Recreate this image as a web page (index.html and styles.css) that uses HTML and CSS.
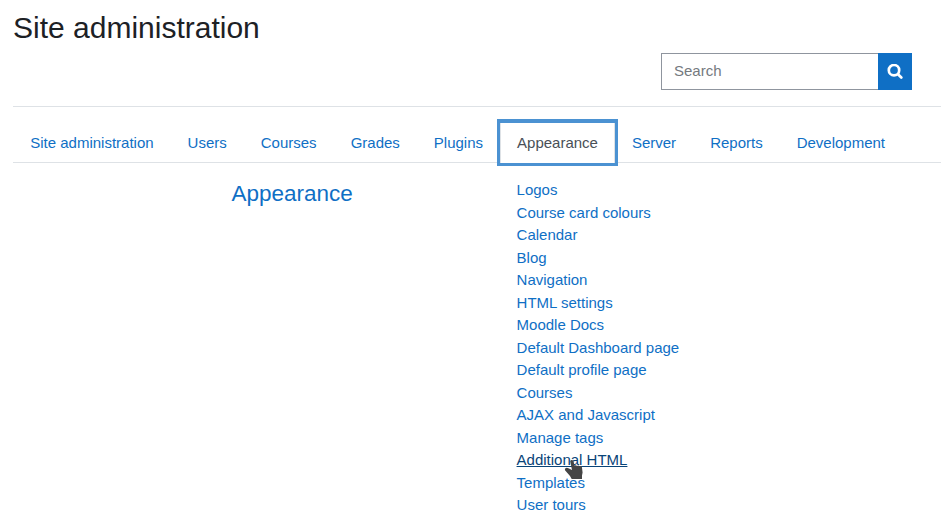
FILE: index.html
```html
<!DOCTYPE html>
<html lang="en">
<head>
<meta charset="utf-8">
<title>Site administration</title>
<link rel="stylesheet" href="styles.css">
</head>
<body>
<main class="page">
<h1>Site administration</h1>
<form class="search"><input type="text" placeholder="Search" aria-label="Search"><button type="button" aria-label="Search"><svg width="16" height="16" viewBox="0 0 16 16"><circle cx="7" cy="6.2" r="5.2"/><path d="M11 10.200l3.300 3.300"/></svg></button></form>
<nav class="tabs"><a>Site administration</a><a>Users</a><a>Courses</a><a>Grades</a><a>Plugins</a><a class="active">Appearance</a><a>Server</a><a>Reports</a><a>Development</a></nav>
<section class="content">
<h2>Appearance</h2>
<ul><li><a>Logos</a></li><li><a>Course card colours</a></li><li><a>Calendar</a></li><li><a>Blog</a></li><li><a>Navigation</a></li><li><a>HTML settings</a></li><li><a>Moodle Docs</a></li><li><a>Default Dashboard page</a></li><li><a>Default profile page</a></li><li><a>Courses</a></li><li><a>AJAX and Javascript</a></li><li><a>Manage tags</a></li><li class="current"><a class="hover">Additional HTML</a><svg class="cursor" width="20" height="22" viewBox="0 0 20 22"><path d="M6.200 3.200Q6.800 1.800 8.200 2.200Q9.300 2.500 9.500 3.500L10.600 7.600Q12 6.600 13 7.900Q14.700 6.900 15.500 8.200Q17.400 7.300 17.900 9L18.600 14.500L18 17.500V21H7.700L6 18L1 12.200Q.3 10.300 2 9.900Q3.300 9.600 5 10.500L8 12Z"/></svg></li><li><a>Templates</a></li><li><a>User tours</a></li></ul>
</section>
</main>
</body>
</html>
```

FILE: styles.css
```css
* { box-sizing: border-box; }
body { margin: 0; background: #fff; font: 15px/22.5px "Liberation Sans", Arial, sans-serif; color: #1d2125; overflow: hidden; }
.page { padding: 10px 0 0 13px; }
h1 { margin: 0; font-size: 30px; font-weight: 400; line-height: 36px; }
.search { display: flex; height: 37px; margin: 7px 29px 16px auto; width: 251px; }
.search input { width: 217px; height: 37px; border: 1px solid #8f959e; border-right: 0; padding: 0 12px 2px; font: inherit; }
.search input::placeholder { color: #757a80; opacity: 1; }
.search button { width: 34px; height: 37px; padding: 0; border: 0; background: #0f6fc5; display: grid; place-items: center; }
.search svg { fill: none; stroke: #fff; stroke-width: 2.7; stroke-linecap: round; }
.tabs { display: flex; height: 57px; border-top: 1px solid #dee2e6; border-bottom: 1px solid #dee2e6; padding: 12px 0 0 .2px; white-space: nowrap; }
a { color: #0f6fc5; }
.tabs a { padding: 13px 17px 0; height: 47px; }
.tabs .active { padding: 9px 17px 0; margin: 0 -3px; border: 3px solid #4b92d2; border-top-width: 4px; background: #fff; color: #495057; box-shadow: inset 1px 0 #dee2e6, inset -1px 0 #dee2e6; }
.content { display: flex; padding-top: 16px; }
h2 { margin: 0 163.7px 0 218.5px; font-size: 22.5px; font-weight: 400; line-height: 30px; color: #0f6fc5; }
ul { margin: 0; padding: 0; list-style: none; }
.current { position: relative; }
.hover { color: #094478; text-decoration: underline; }
.cursor { position: absolute; left: 47px; top: 9px; fill: #454545; }
```
